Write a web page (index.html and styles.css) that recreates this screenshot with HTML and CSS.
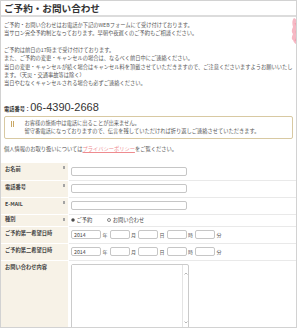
FILE: index.html
```html
<!DOCTYPE html>
<html lang="ja">

<head>
  <meta charset="utf-8">
  <link rel="stylesheet" href="styles.css">
</head>

<body>
  <div class="page">
    <h1 class="title">ご予約・お問い合わせ</h1>
    <!-- flower peeking in at the right edge -->
    <svg class="flower" width="8" height="28" viewBox="0 0 8 28">
      <path d="M4 0 C6 1 8 3 8 6 L8 26 C6 27 4 25 3 22 C1 21 2 18 3 16 C1 14 2 11 3 9 C2 6 2 2 4 0 Z" fill="#f6b8c4"/>
      <path d="M5 5 C7 7 7 11 6 14 C7 17 7 20 5 23" fill="none" stroke="#f29cae" stroke-width="1"/>
    </svg>

    <div class="lead">
      <p>ご予約・お問い合わせはお電話か下記のWEBフォームにて受け付けております。<br>当サロン完全予約制となっております。早朝や夜遅くのご予約もご相談ください。</p>
      <p>ご予約は前日の17時まで受け付けております。<br>また、ご予約の変更・キャンセルの場合は、なるべく前日中にご連絡ください。<br>当日の変更・キャンセルが続く場合はキャンセル料を頂戴させていただきますので、ご注意くださいますようお願いいたします。（天災・交通事故等は除く）<br>当日やむなくキャンセルされる場合も必ずご連絡ください。</p>
    </div>

    <p class="tel"><span class="tel-label">電話番号：</span>06-4390-2668</p>

    <div class="notice">
      <span class="notice-icon"></span>
      <p>お客様の施術中は電話に出ることが出来ません。<br>留守番電話になっておりますので、伝言を残していただければ折り返しご連絡させていただきます。</p>
    </div>

    <p class="privacy">個人情報のお取り扱いについては<a href="#">プライバシーポリシー</a>をご覧ください。</p>

<!-- form -->
    <div class="form">
      <div class="deco"></div>
      <div class="row first">
        <div class="label">お名前<span class="req"></span></div>
        <div class="field"><input type="text" class="text-input"></div>
      </div>
      <div class="row">
        <div class="label">電話番号<span class="req"></span></div>
        <div class="field"><input type="text" class="text-input"></div>
      </div>
      <div class="row">
        <div class="label">E-MAIL<span class="req"></span></div>
        <div class="field"><input type="text" class="text-input"></div>
      </div>
      <div class="row compact">
        <div class="label">種別<span class="req"></span></div>
        <div class="field">
          <label class="choice"><input type="radio" name="kind" checked>ご予約</label>
          <label class="choice"><input type="radio" name="kind">お問い合わせ</label>
        </div>
      </div>
      <div class="row">
        <div class="label">ご予約第一希望日時</div>
        <div class="field">
          <input type="text" class="year" value="2014"><span class="unit">年</span>
          <input type="text" class="num"><span class="unit">月</span>
          <input type="text" class="num"><span class="unit">日</span>
          <input type="text" class="num"><span class="unit">時</span>
          <input type="text" class="num"><span class="unit">分</span>
        </div>
      </div>
      <div class="row">
        <div class="label">ご予約第二希望日時</div>
        <div class="field">
          <input type="text" class="year" value="2014"><span class="unit">年</span>
          <input type="text" class="num"><span class="unit">月</span>
          <input type="text" class="num"><span class="unit">日</span>
          <input type="text" class="num"><span class="unit">時</span>
          <input type="text" class="num"><span class="unit">分</span>
        </div>
      </div>
      <div class="row last">
        <div class="label">お問い合わせ内容</div>
        <div class="field">
          <div class="memo">
            <textarea class="memo-input"></textarea>
            <div class="memo-bar">
              <svg width="4" height="3" viewBox="0 0 4 3"><polyline points="0.5,2.5 2,1 3.5,2.5" fill="none" stroke="#999" stroke-width="0.7"/></svg>
              <svg width="4" height="3" viewBox="0 0 4 3"><polyline points="0.5,0.5 2,2 3.5,0.5" fill="none" stroke="#999" stroke-width="0.7"/></svg>
            </div>
          </div>
        </div>
      </div>
    </div>
  </div>
</body>

</html>
```

FILE: styles.css
```css
body {
  margin: 0;
  font-family: "Noto Sans CJK JP", sans-serif;
  font-size: 5.25px;
  line-height: 8.33px;
  color: #555;
  background: #fff;
}

.page {
  position: relative;
  width: 295px;
  height: 326px;
  border: 1px solid #d2d2d2;
  overflow: hidden;
}

.title {
  margin: 0;
  padding: 0 3px;
  font-size: 9.6px;
  line-height: 14px;
  font-weight: bold;
  color: #333;
  border-bottom: 2px solid #dcdcdc;
}

.flower {
  position: absolute;
  top: 17px;
  right: -2px;
}

.lead {
  padding: 4px 2px 0 3px;
}

.lead p {
  margin: 0 0 8.33px;
}

.lead p:last-child {
  margin-bottom: 0;
}

.tel {
  margin: 12.5px 0 0;
  padding-left: 3px;
  font-family: "Liberation Sans", sans-serif;
  font-size: 11px;
  line-height: 14px;
  color: #333;
}

.tel-label {
  font-family: "Noto Sans CJK JP", sans-serif;
  font-size: 5.25px;
  font-weight: bold;
}

.notice {
  display: flex;
  margin: 0 3px 0 3px;
  padding: 3px 4px;
  border: 1px solid #d8c9a2;
  border-radius: 2px;
  line-height: 7.5px;
}

.notice p {
  margin: 0;
}

.notice-icon {
  flex-shrink: 0;
  width: 1px;
  height: 6px;
  margin: 1px 11px 0 1.5px;
  border-left: 1px solid #c9a867;
  border-right: 1px solid #c9a867;
}

.privacy {
  margin: 6px 0 0;
  padding-left: 3px;
}

.privacy a {
  color: #ee8b8f;
}

/* form */
.form {
  position: relative;
  margin-top: 9.5px;
}

.deco {
  position: absolute;
  left: 0;
  top: 35px;
  width: 2px;
  height: 115px;
  background: linear-gradient(to bottom, #f2a566 0 15px, transparent 15px 44px, #f0a062 44px 59px, transparent 59px 66px, #f5b072 66px 74px, transparent 74px 92px, #f9e39a 92px 112px, transparent 112px);
}

.row {
  display: flex;
}

.label {
  position: relative;
  width: 63px;
  flex-shrink: 0;
  padding: 2.5px 0 0 4px;
  background: #f7f2e7;
  border-bottom: 1px solid #fff;
  font-weight: bold;
  color: #444;
}

.req {
  position: absolute;
  right: 3px;
  top: 3.5px;
  width: 2.5px;
  height: 2.5px;
  background: #a3a3a3;
}

.field {
  flex: 1;
  display: flex;
  align-items: center;
  margin-left: 1px;
  padding: 3.5px 2px;
  border-bottom: 1px solid #e9e9e9;
}

.row.first .field {
  padding: 4px 2px;
}

.row.compact .label {
  padding-top: 0.5px;
}

.row.compact .field {
  padding: 1.5px 2px;
  line-height: 8px;
}

.row.last .field {
  align-items: flex-start;
}

input {
  box-sizing: border-box;
  height: 9px;
  margin: 0;
  padding: 0 2px;
  border: 1px solid #c6c6c6;
  border-radius: 2px;
  font-family: inherit;
  font-size: 5.25px;
  color: #444;
  background: #fff;
}

.text-input {
  width: 116px;
}

.year {
  width: 30px;
}

.num {
  width: 20px;
}

.unit {
  margin: 0 2px 0 1.5px;
  font-size: 5px;
  color: #555;
}

.choice {
  display: flex;
  align-items: center;
  margin-right: 15px;
  color: #444;
}

.choice input {
  appearance: none;
  width: 4px;
  height: 4px;
  padding: 0;
  margin: 0 1.5px 0 0;
  border: 0.6px solid #888;
  border-radius: 50%;
}

.choice input:checked {
  background: radial-gradient(circle, #333 0 1px, #fff 1.2px);
}

.memo {
  display: flex;
  width: 118px;
  height: 70px;
  box-sizing: border-box;
  border: 1px solid #cbcbcb;
  border-radius: 2px;
}

.memo-input {
  flex: 1;
  border: none;
  border-radius: 0;
  resize: none;
  outline: none;
  padding: 2px;
  font-family: inherit;
  font-size: 5.25px;
}

.memo-bar {
  width: 5px;
  display: flex;
  flex-direction: column;
  justify-content: space-between;
  align-items: center;
  padding: 7px 0 9px;
  border-left: 1px solid #e4e4e4;
}
```
